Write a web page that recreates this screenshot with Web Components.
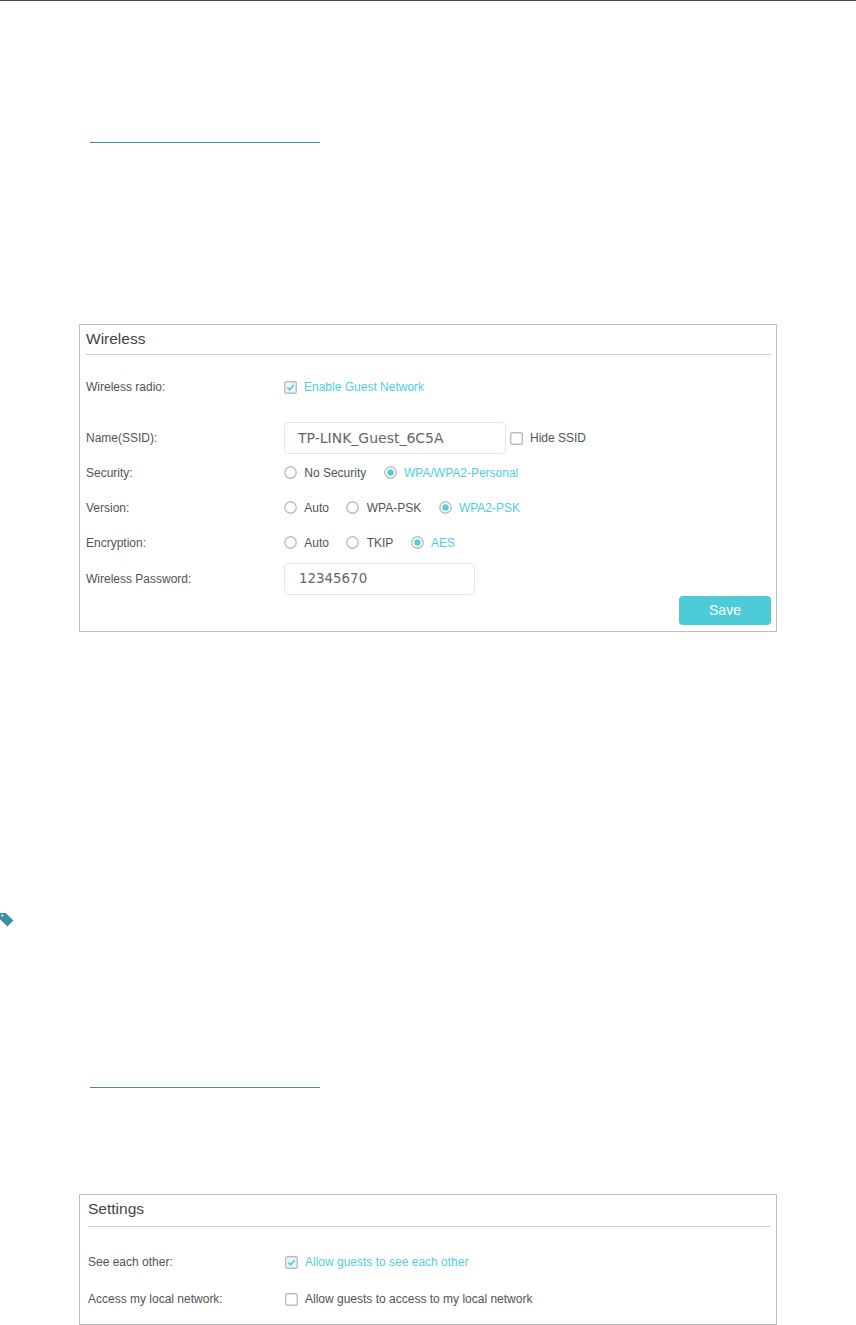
<!DOCTYPE html>
<html>
<head>
<meta charset="utf-8">
<style>
  html, body { margin: 0; background: #fff; }
  body { width: 856px; height: 1325px; overflow: hidden; font-family: "Liberation Sans", Arial, sans-serif; color: #4f5459; }
</style>
</head>
<body>
<guide-page>
  <section-rule style="--top:141px;--color:#3a95a8"></section-rule>
  <form-panel title="Wireless" style="--top:181px;--pad:6px;--right:5px;--bottom:6px;--head:29px">
    <form-row label="Wireless radio:" style="--h:32px;--gap:16px"><check-opt checked>Enable Guest Network</check-opt></form-row>
    <form-row label="Name(SSID):" style="--h:32px;--gap:19px"><text-box style="--w:222px;--fs:14px;--indent:13px">TP-LINK_Guest_6C5A</text-box><check-opt>Hide SSID</check-opt></form-row>
    <form-row label="Security:" style="--h:35px;--gap:1px">
      <radio-opt>No Security</radio-opt><radio-opt checked>WPA/WPA2-Personal</radio-opt>
    </form-row>
    <form-row label="Version:" style="--h:35px">
      <radio-opt>Auto</radio-opt><radio-opt>WPA-PSK</radio-opt><radio-opt checked>WPA2-PSK</radio-opt>
    </form-row>
    <form-row label="Encryption:" style="--h:35px">
      <radio-opt>Auto</radio-opt><radio-opt>TKIP</radio-opt><radio-opt checked>AES</radio-opt>
    </form-row>
    <form-row label="Wireless Password:" style="--h:32px;--gap:3px"><text-box style="--w:191px;--fs:13.4px;--indent:14px">12345670</text-box></form-row>
    <save-button>Save</save-button>
  </form-panel>
  <tag-icon style="--top:281px"></tag-icon>
  <section-rule style="--top:161px;--color:#4a8b9b"></section-rule>
  <form-panel title="Settings" style="--top:106px;--pad:8px;--right:6px;--bottom:6px;--head:31px">
    <form-row label="See each other:" style="--h:36px;--gap:17px;--label:197px"><check-opt checked>Allow guests to see each other</check-opt></form-row>
    <form-row label="Access my local network:" style="--h:38px;--label:197px"><check-opt>Allow guests to access to my local network</check-opt></form-row>
  </form-panel>
</guide-page>

<script>
(function () {
  const TEAL = "#4fcfdb";

  /* =========================
     PAGE
  ========================= */
  class GuidePage extends HTMLElement {
    constructor() {
      super();
      this.attachShadow({ mode: "open" });
      this.shadowRoot.innerHTML = `
      <style>
      :host{ display:block; border-top:1px solid #4a4a4a; }
      </style>
      <slot></slot>`;
    }
  }

  /* =========================
     SECTION UNDERLINE
  ========================= */
  class SectionRule extends HTMLElement {
    constructor() {
      super();
      this.attachShadow({ mode: "open" });
      this.shadowRoot.innerHTML = `
      <style>
      :host{
        display:block;
        width:230px;
        height:1px;
        margin:var(--top) 0 0 90px;
        background:var(--color);
      }
      </style>`;
    }
  }

  /* =========================
     PANEL
  ========================= */
  class FormPanel extends HTMLElement {
    constructor() {
      super();
      this.attachShadow({ mode: "open" });
      this.shadowRoot.innerHTML = `
      <style>
      :host{
        display:block;
        box-sizing:border-box;
        width:698px;
        margin:var(--top) 0 0 79px;
        border:1px solid #bfbfbf;
        padding:0 var(--right) var(--bottom) var(--pad);
      }
      .title{
        height:var(--head);
        line-height:27px;
        font-size:15.5px;
        color:#3f4448;
        border-bottom:1px solid #cccccc;
      }
      </style>
      <div class="title"></div>
      <slot></slot>`;
      this.shadowRoot.querySelector(".title").textContent = this.getAttribute("title");
    }
  }

  /* =========================
     ROW
  ========================= */
  class FormRow extends HTMLElement {
    constructor() {
      super();
      this.attachShadow({ mode: "open" });
      this.shadowRoot.innerHTML = `
      <style>
      :host{
        display:flex;
        align-items:center;
        height:var(--h);
        margin-top:var(--gap, 0);
        font-size:12px;
      }
      .label{ width:var(--label, 198px); flex:none; }
      .field{ display:flex; align-items:center; gap:17.5px; }
      </style>
      <div class="label"></div>
      <div class="field"><slot></slot></div>`;
      this.shadowRoot.querySelector(".label").textContent = this.getAttribute("label");
    }
  }

  /* =========================
     RADIO
  ========================= */
  class RadioOpt extends HTMLElement {
    constructor() {
      super();
      this.attachShadow({ mode: "open" });
      const on = this.hasAttribute("checked");
      this.shadowRoot.innerHTML = `
      <style>
      :host{
        display:inline-flex;
        align-items:center;
        gap:7.25px;
        color:${on ? TEAL : "inherit"};
      }
      svg{ display:block; flex:none; }
      </style>
      <svg width="13" height="13" viewBox="0 0 13 13">
        <circle cx="6.5" cy="6.5" r="5.7" fill="#fff" stroke="#bdbdbd" stroke-width="1.4"/>
        ${on ? `<circle cx="6.5" cy="6.5" r="3.2" fill="${TEAL}"/>` : ""}
      </svg>
      <span><slot></slot></span>`;
    }
  }

  /* =========================
     CHECKBOX
  ========================= */
  class CheckOpt extends HTMLElement {
    constructor() {
      super();
      this.attachShadow({ mode: "open" });
      const on = this.hasAttribute("checked");
      this.shadowRoot.innerHTML = `
      <style>
      :host{
        display:inline-flex;
        align-items:center;
        gap:7px;
        color:${on ? TEAL : "inherit"};
      }
      svg{ display:block; flex:none; }
      </style>
      <svg width="13" height="13" viewBox="0 0 13 13">
        <rect x="0.7" y="0.7" width="11.6" height="11.6" rx="1.8" fill="${on ? "#eef3f4" : "#fff"}" stroke="#bdbdbd" stroke-width="1.4"/>
        ${on ? `<path d="M3.4 6.6 5.6 8.8 9.8 4.2" fill="none" stroke="${TEAL}" stroke-width="1.8"/>` : ""}
      </svg>
      <span><slot></slot></span>`;
    }
  }

  /* =========================
     TEXT BOX
  ========================= */
  class TextBox extends HTMLElement {
    constructor() {
      super();
      this.attachShadow({ mode: "open" });
      this.shadowRoot.innerHTML = `
      <style>
      :host{
        display:block;
        box-sizing:border-box;
        width:var(--w);
        height:32px;
        line-height:30px;
        padding-left:var(--indent);
        border:1px solid #e6e6e6;
        border-radius:4px;
        font-family:"DejaVu Sans",sans-serif;
        font-size:var(--fs);
        color:#666666;
        margin-right:-13.5px;
      }
      </style>
      <slot></slot>`;
    }
  }

  /* =========================
     SAVE
  ========================= */
  class SaveButton extends HTMLElement {
    constructor() {
      super();
      this.attachShadow({ mode: "open" });
      this.shadowRoot.innerHTML = `
      <style>
      :host{
        display:block;
        width:92px;
        height:29px;
        line-height:29px;
        margin:1px 0 0 auto;
        background:#4dccd8;
        border-radius:4px;
        color:#fff;
        font-size:14px;
        text-align:center;
      }
      </style>
      <slot></slot>`;
    }
  }

  /* =========================
     NOTE TAG ICON
  ========================= */
  class TagIcon extends HTMLElement {
    constructor() {
      super();
      this.attachShadow({ mode: "open" });
      this.shadowRoot.innerHTML = `
      <style>
      :host{ display:block; width:14px; height:14px; margin-top:var(--top); margin-bottom:-1px; }
      svg{ display:block; }
      </style>
      <svg width="14" height="14" viewBox="0 0 14 14">
        <path fill="#3a90a6" fill-rule="evenodd" d="M0 0H5.6L13.4 7.6 7.4 13.6 0 6.2ZM2.4 1.6A1 1 0 1 0 2.41 1.6Z"/>
      </svg>`;
    }
  }

  customElements.define("guide-page", GuidePage);
  customElements.define("section-rule", SectionRule);
  customElements.define("form-panel", FormPanel);
  customElements.define("form-row", FormRow);
  customElements.define("radio-opt", RadioOpt);
  customElements.define("check-opt", CheckOpt);
  customElements.define("text-box", TextBox);
  customElements.define("save-button", SaveButton);
  customElements.define("tag-icon", TagIcon);
})();
</script>
</body>
</html>
